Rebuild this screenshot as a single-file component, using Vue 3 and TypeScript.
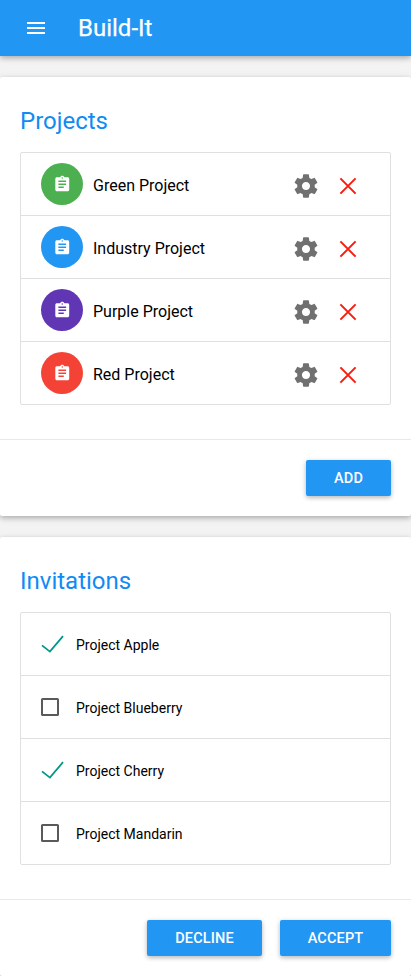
<script setup lang="ts">
import { ref } from 'vue'

interface Project {
  name: string
  tone: string
}
interface Invitation {
  name: string
  checked: boolean
}

const projects = ref<Project[]>([
  { name: 'Green Project', tone: 'green' },
  { name: 'Industry Project', tone: 'blue' },
  { name: 'Purple Project', tone: 'purple' },
  { name: 'Red Project', tone: 'red' },
])

const invitations = ref<Invitation[]>([
  { name: 'Project Apple', checked: true },
  { name: 'Project Blueberry', checked: false },
  { name: 'Project Cherry', checked: true },
  { name: 'Project Mandarin', checked: false },
])
</script>

<template>
  <div class="page">
    <header class="bar">
      <svg class="menu" viewBox="0 0 24 24"><path d="M3 18h18v-2H3v2zm0-5h18v-2H3v2zm0-7v2h18V6H3z" /></svg>
      <h1 class="brand">Build-It</h1>
    </header>

    <section class="card">
      <div class="content">
        <h2 class="title">Projects</h2>
        <ul class="list">
          <li v-for="p in projects" :key="p.name" class="row">
            <span class="avatar" :class="p.tone">
              <svg viewBox="0 0 24 24"><path d="M19 3h-4.18C14.4 1.84 13.3 1 12 1c-1.3 0-2.4.84-2.82 2H5c-1.1 0-2 .9-2 2v14c0 1.1.9 2 2 2h14c1.1 0 2-.9 2-2V5c0-1.1-.9-2-2-2zm-7 0c.55 0 1 .45 1 1s-.45 1-1 1-1-.45-1-1 .45-1 1-1zm2 14H7v-2h7v2zm3-4H7v-2h10v2zm0-4H7V7h10v2z" /></svg>
            </span>
            <span class="name">{{ p.name }}</span>
            <svg class="gear" viewBox="0 0 24 24"><path d="M19.43 12.98c.04-.32.07-.64.07-.98s-.03-.66-.07-.98l2.11-1.65c.19-.15.24-.42.12-.64l-2-3.46c-.12-.22-.39-.3-.61-.22l-2.49 1c-.52-.4-1.08-.73-1.69-.98l-.38-2.65C14.46 2.18 14.25 2 14 2h-4c-.25 0-.46.18-.49.42l-.38 2.65c-.61.25-1.17.59-1.69.98l-2.49-1c-.23-.09-.49 0-.61.22l-2 3.46c-.13.22-.07.49.12.64l2.11 1.65c-.04.32-.07.65-.07.98s.03.66.07.98l-2.11 1.65c-.19.15-.24.42-.12.64l2 3.46c.12.22.39.3.61.22l2.49-1c.52.4 1.08.73 1.69.98l.38 2.65c.03.24.24.42.49.42h4c.25 0 .46-.18.49-.42l.38-2.65c.61-.25 1.17-.59 1.69-.98l2.49 1c.23.09.49 0 .61-.22l2-3.46c.12-.22.07-.49-.12-.64l-2.11-1.65zM12 15.5c-1.93 0-3.5-1.57-3.5-3.5s1.57-3.5 3.5-3.5 3.5 1.57 3.5 3.5-1.57 3.5-3.5 3.5z" /></svg>
            <svg class="remove" viewBox="0 0 16 16"><path d="M.4.4l15.2 15.2M15.6.4L.4 15.6" /></svg>
          </li>
        </ul>
      </div>
      <div class="actions">
        <button class="btn add">ADD</button>
      </div>
    </section>

    <section class="card">
      <div class="content">
        <h2 class="title">Invitations</h2>
        <ul class="list">
          <li v-for="i in invitations" :key="i.name" class="row" @click="i.checked = !i.checked">
            <svg class="check" viewBox="0 0 24 20">
              <path v-if="i.checked" class="tick" d="M1 10.4L8.9 16.6L22 1.2" />
              <rect v-else class="box" x="1" y="1" width="16" height="16" rx=".6" />
            </svg>
            <span class="label">{{ i.name }}</span>
          </li>
        </ul>
      </div>
      <div class="actions">
        <button class="btn decline">DECLINE</button>
        <button class="btn accept">ACCEPT</button>
      </div>
    </section>
  </div>
</template>

<style>
body {
  background: #f3f3f3;
}
</style>

<style scoped>
.page {
  height: 976px;
  overflow: hidden;
  font-family: Roboto, "Liberation Sans", sans-serif;
  color: #000;
}
.page * {
  box-sizing: border-box;
}
.bar {
  display: flex;
  align-items: center;
  height: 56px;
  padding-left: 24px;
  background: #2196f3;
  color: #fff;
  box-shadow: 0 2px 5px 0 rgba(0, 0, 0, 0.22), 0 2px 8px 0 rgba(0, 0, 0, 0.1);
}
.menu {
  width: 24px;
  height: 24px;
  fill: #fff;
}
.brand {
  margin: 0 0 0 30px;
  font-size: 24px;
  font-weight: 400;
  line-height: 56px;
  -webkit-text-stroke: 0.25px #fff;
}
.card {
  height: 439px;
  margin-top: 21px;
  background: #fff;
  border-radius: 2px;
  box-shadow: 0 2px 5px 0 rgba(0, 0, 0, 0.22), 0 2px 8px 0 rgba(0, 0, 0, 0.1);
}
.content {
  height: 362px;
  padding: 20px 20px 0;
}
.title {
  margin: 0;
  height: 55px;
  font-size: 24px;
  font-weight: 400;
  line-height: 48px;
  color: #108bf4;
}
.list {
  margin: 0;
  padding: 0;
  list-style: none;
  border: 1px solid #e0e0e0;
  border-radius: 2px;
}
.row {
  display: flex;
  align-items: center;
  height: 63px;
  padding-left: 20px;
  border-bottom: 1px solid #e0e0e0;
}
.row:last-child {
  height: 62px;
  border-bottom: 0;
}
.avatar {
  display: flex;
  align-items: center;
  justify-content: center;
  width: 42px;
  height: 42px;
  border-radius: 50%;
}
.avatar svg {
  width: 18.5px;
  height: 18.5px;
  fill: #fff;
}
.green {
  background: #4caf50;
}
.blue {
  background: #2196f3;
}
.purple {
  background: #6036b5;
}
.red {
  background: #f44336;
}
.name {
  flex: 1;
  margin-left: 10px;
  padding-top: 4px;
  font-size: 16px;
  line-height: 20px;
}
.gear {
  width: 28px;
  height: 28px;
  margin: 3px 20px 0 0;
  fill: #707070;
}
.remove {
  width: 16px;
  height: 16px;
  margin: 3px 34px 0 0;
  overflow: visible;
  fill: none;
  stroke: #f91a10;
  stroke-width: 2;
}
.check {
  width: 24px;
  height: 20px;
  margin-top: 2px;
  overflow: visible;
  fill: none;
}
.tick {
  stroke: #009688;
  stroke-width: 1.8;
}
.box {
  stroke: #5a5a5a;
  stroke-width: 2;
}
.label {
  margin-left: 11px;
  padding-top: 2px;
  font-size: 14px;
  line-height: 20px;
}
.actions {
  display: flex;
  justify-content: flex-end;
  gap: 18px;
  height: 77px;
  padding: 20px 20px 0;
  border-top: 1px solid #e9e9e9;
}
.btn {
  height: 36px;
  padding: 2px 0 0;
  border: 0;
  border-radius: 2px;
  background: #2196f3;
  color: #fff;
  font-family: inherit;
  font-size: 14.5px;
  font-weight: 500;
  line-height: 34px;
  letter-spacing: 0.15px;
  box-shadow: 0 2px 4px 0 rgba(0, 0, 0, 0.2), 0 1px 6px 0 rgba(0, 0, 0, 0.1);
}
.add {
  width: 85px;
}
.decline {
  width: 115px;
}
.accept {
  width: 111px;
}
</style>
